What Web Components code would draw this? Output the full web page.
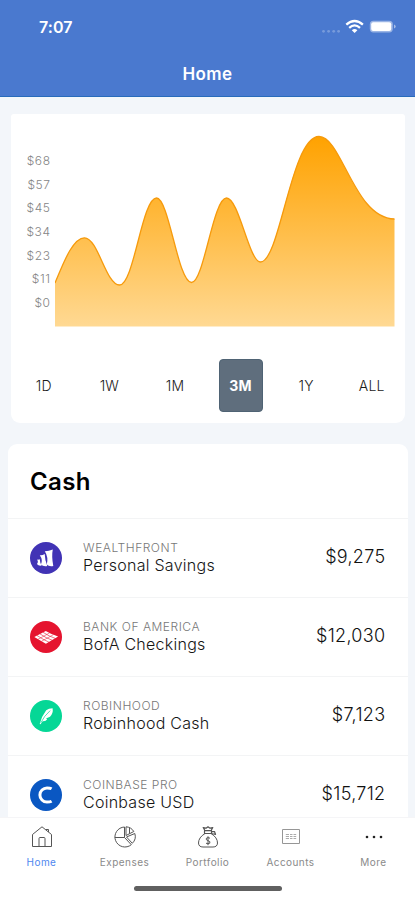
<!DOCTYPE html>
<html lang="en">
<head>
<meta charset="utf-8">
<title>Home</title>
<style>
  html, body { margin: 0; height: 100%; }
  body { font-family: Inter, "Liberation Sans", sans-serif; color: #111; background: #f3f6fa; overflow: hidden; }
</style>
</head>
<body>
<finance-app></finance-app>
<script>
const define = (name, html, setup) => {
  const tpl = document.createElement('template');
  tpl.innerHTML = html;
  customElements.define(name, class extends HTMLElement {
    connectedCallback() {
      if (this.shadowRoot) return;
      this.attachShadow({ mode: 'open' }).append(tpl.content.cloneNode(true));
      if (setup) setup(this, this.shadowRoot);
    }
  });
};

define('status-bar', `
<style>
  :host { display: flex; align-items: center; justify-content: space-between; height: 54px; padding: 0 19px 0 39px; box-sizing: border-box; color: #fff; }
  time { font-size: 16px; font-weight: 600; line-height: 20px; letter-spacing: .1px; }
  svg { display: block; }
</style>
<time>7:07</time>
<svg width="76" height="20" viewBox="0 0 76 20" fill="#fff">
  <g opacity=".25"><circle cx="3.5" cy="14.3" r="1.4"/><circle cx="8.6" cy="14.3" r="1.4"/><circle cx="13.7" cy="14.3" r="1.4"/><circle cx="18.6" cy="14.3" r="1.4"/></g>
  <g fill="none" stroke="#fff" stroke-width="2.3"><path d="M26.3 7.7Q34.6.4 42.9 7.7"/><path d="M29.2 10.8Q34.6 6 40 10.8"/></g>
  <path d="M31.8 13.2Q34.6 10.9 37.4 13.2L34.6 16.1Z"/>
  <rect x="49.8" y="3.8" width="23" height="11.6" rx="3.6" opacity=".45"/>
  <rect x="51.2" y="5.2" width="20" height="8.8" rx="2"/>
  <path d="M74 7.6Q75.700 8.2 75.700 9.6T74 11.6Z" opacity=".5"/>
</svg>`);

define('nav-header', `
<style>
  :host { display: flex; flex-direction: column; height: 97px; flex: none; box-sizing: border-box; background: #4a79cf; border-bottom: 1px solid #286bbb; }
  h1 { margin: 0; flex: 1; padding-top: 9px; font-size: 17px; line-height: 22px; font-weight: 600; letter-spacing: .4px; color: #fff; text-align: center; }
</style>
<status-bar></status-bar>
<h1><slot></slot></h1>`);

define('area-chart', `
<style>
  :host { display: flex; height: 213px; }
  ol { list-style: none; margin: 0; padding: 35px 5px 0 0; width: 44px; box-sizing: border-box; text-align: right; font-size: 12px; color: #858585; font-weight: 300; letter-spacing: .6px; }
  li { height: 23.7px; line-height: 24px; margin-right: -.6px; }
  svg { display: block; flex: none; }
</style>
<ol></ol>
<svg width="340" height="213" viewBox="55 114 340 213">
  <defs><linearGradient id="fade" x1="0" y1="0" x2="0" y2="1"><stop offset="0" stop-color="#ffa200"/><stop offset=".5" stop-color="#ffbd48"/><stop offset="1" stop-color="#ffd993"/></linearGradient></defs>
  <path fill="url(#fade)" d="M55 283C62 267 72 237.8 84.500 237.8C98 237.8 106 285 119.500 285C134 285 142 198 156.500 198C169 198 178 282.500 191.500 282.500C204 282.500 213 198 226.500 198C239 198 249 262 260.500 262C280 262 291 136.500 319 136.500C342 136.500 354 218.500 394.500 219V326.500H55Z"/>
  <path fill="none" stroke="#f69a0c" stroke-width="1.300" d="M55 283C62 267 72 237.8 84.500 237.8C98 237.8 106 285 119.500 285C134 285 142 198 156.500 198C169 198 178 282.500 191.500 282.500C204 282.500 213 198 226.500 198C239 198 249 262 260.500 262C280 262 291 136.500 319 136.500C342 136.500 354 218.500 394.500 219"/>
</svg>`, (el, root) => {
  root.querySelector('ol').innerHTML = el.getAttribute('ticks').split(',').map(t => `<li>${t}</li>`).join('');
});

define('range-option', `
<style>
  :host { display: flex; align-items: center; justify-content: center; font-size: 14px; font-weight: 300; color: #1b1b1b; }
  span { display: flex; align-items: center; justify-content: center; width: 44px; height: 53px; box-sizing: border-box; border-radius: 4px; letter-spacing: .2px; }
  :host([selected]) span { background: #5f6e7d; border: 1px solid #4f6374; color: #fff; font-weight: 700; }
</style>
<span><slot></slot></span>`);

define('chart-card', `
<style>
  :host { display: block; height: 309px; margin: 17px 10px 0 11px; box-sizing: border-box; background: #fff; border-radius: 3px 3px 9px 9px; }
  nav { display: grid; grid-template-columns: repeat(6, 65.600px); margin-top: 32px; }
</style>
<area-chart ticks="$68,$57,$45,$34,$23,$11,$0"></area-chart>
<nav>
  <range-option>1D</range-option><range-option>1W</range-option><range-option>1M</range-option>
  <range-option selected>3M</range-option><range-option>1Y</range-option><range-option>ALL</range-option>
</nav>`);

const logos = {
  wealthfront: `<circle cx="16" cy="16" r="16" fill="#4133b5"/><g fill="#fff"><path d="M14.800 9.200Q18.500 9.300 22.800 7.400Q21.400 14 23.300 24Q19 24.800 16.800 22.600Q18.600 15 14.800 9.200Z"/><path d="M9.800 13.200Q12.500 13.500 14.700 12Q14.900 18.500 17.300 23.900Q13.500 24.900 10.900 22.400Q13.200 18 9.800 13.200Z"/><path d="M7 17.500Q8.400 17.900 9.700 17.200Q10 20.800 11.700 23.500Q8.700 24.200 6.900 21.900Q8.800 20 7 17.500Z"/></g>`,
  bofa: `<circle cx="16" cy="16" r="16" fill="#e5142f"/><path fill="#fff" d="M4.300 16L15.800 10.100Q20 12.700 28.100 15.600L15.900 22.700Q10.500 19.700 4.300 16Z"/><g fill="none" stroke="#e5142f" stroke-width=".6"><path d="M7 14.500Q13 18.500 19 21.200M10 12.900Q16 17 22.300 19.300M13 11.300Q19 15.300 25.500 17.500"/><path d="M8 18.300L19.500 12M11.500 20.300L23.500 13.600" stroke-width=".5"/></g>`,
  robinhood: `<circle cx="16" cy="16" r="16" fill="#05d796"/><path fill="#fff" d="M9.700 23.900Q11.500 16.500 16.200 10.300Q18.700 8.300 22.600 8.200Q23.500 13 20 16.700L16 18.600L17.200 19.200Q15.600 21.500 12.900 21.100L10.500 24.300Z"/><path d="M10.800 22.800Q14 16 20.200 10.600" fill="none" stroke="#05d796" stroke-width=".7"/>`,
  coinbase: `<circle cx="16" cy="16" r="16" fill="#0a57c2"/><path fill="none" stroke="#fff" stroke-width="3" d="M21.600 9.800Q20 8.900 17 8.900A7.100 7.100 0 0 0 17 23.100Q20 23.100 21.600 22.200"/>`
};

define('account-row', `
<style>
  :host { display: flex; align-items: center; height: 79.150px; padding: 0 23px 0 22px; box-sizing: border-box; border-top: 1px solid #f3f4f5; }
  svg { width: 32px; height: 32px; flex: none; }
  div { flex: 1; margin-left: 21px; margin-top: -2px; }
  small, b { display: block; white-space: nowrap; }
  small { font-size: 12px; line-height: 17px; font-weight: 300; color: #777; letter-spacing: .53px; }
  b { font-size: 16px; line-height: 19px; font-weight: 300; color: #161616; letter-spacing: .26px; }
  strong { font-size: 18px; font-weight: 300; color: #111; margin: -4px -.4px 0 0; letter-spacing: .3px; }
</style>
<svg viewBox="0 0 32 32"></svg>
<div><small></small><b><slot></slot></b></div>
<strong></strong>`, (el, root) => {
  root.querySelector('svg').innerHTML = logos[el.getAttribute('logo')];
  root.querySelector('small').textContent = el.getAttribute('bank');
  root.querySelector('strong').textContent = el.getAttribute('amount');
});

define('account-list', `
<style>
  :host { display: block; margin: 21px 7px 0 8px; background: #fff; border-radius: 9px 9px 0 0; }
  h2 { margin: 0; height: 74px; line-height: 75px; padding-left: 22px; font-size: 24px; font-weight: 600; color: #000; letter-spacing: .4px; }
</style>
<h2>Cash</h2>
<slot></slot>`);

const icons = {
  home: `<path d="M2.500 9.500L12 1.800L21.500 9.500V21.500H2.500Z"/><path d="M9 21.500V13.500Q9 12.500 10 12.500H14Q15 12.500 15 13.500V21.500"/><path d="M16 4.500H18.500V7"/>`,
  expenses: `<path d="M11.500 12.500V2A10 10 0 1 0 18.300 19.700Z"/><path d="M1.800 12.500H11.500"/><path d="M13 10.500V1.800A9.700 9.700 0 0 1 20.800 6.500ZM16.500 2.800V8.500M13.500 12L21.800 8.500A9.500 9.500 0 0 1 19.300 18.300Z"/>`,
  portfolio: `<path d="M9 8.500Q2.500 12.500 2.500 18Q2.700 22 7 22H17Q21.300 22 21.500 18Q21.500 12.500 15 8.500Z"/><path d="M8.500 5.700H15.500V8.500H8.500ZM9 5.700L7.200 2.500L10 3.200L12 1.800L14 3.200L16.800 2.500L15 5.700M15.500 6.700L18.500 6.500L19.500 9.500L15.500 8.500" stroke-width="1.200"/><path d="M14 13.200Q12 12.100 10.400 13.200Q9.500 15 12 15.600Q14.700 16.400 13.800 18.200Q12 19.300 10 18.200M12 11.300V20.200"/>`,
  accounts: `<g stroke="#969696"><path d="M3.500 4.500H20.500V18.500H3.500Z"/><path d="M6.800 9.500H10M11 9.500H13.500M14.500 9.500H17.200M6.800 11.500H10M11 11.500H13.500M14.500 11.500H17.200M6.800 13.500H10M11 13.500H13.500M14.500 13.500H17.200" stroke-width=".8"/></g>`,
  more: `<g fill="#222" stroke="none"><circle cx="5" cy="12" r="1.300"/><circle cx="12" cy="12" r="1.300"/><circle cx="19" cy="12" r="1.300"/></g>`
};

define('tab-item', `
<style>
  :host { display: flex; flex-direction: column; align-items: center; color: #8a8a8a; }
  svg { width: 24px; height: 24px; fill: none; stroke: #555; stroke-width: 1; stroke-linejoin: round; }
  span { margin-top: 6px; font-size: 10px; line-height: 14px; font-weight: 400; letter-spacing: .45px; }
  :host([active]) { color: #4f87ef; }
</style>
<svg viewBox="0 0 24 24"></svg>
<span><slot></slot></span>`, (el, root) => {
  root.querySelector('svg').innerHTML = icons[el.getAttribute('icon')];
});

define('tab-bar', `
<style>
  :host { display: flex; flex-direction: column; align-items: center; height: 83px; flex: none; box-sizing: border-box; background: #fff; border-top: 1px solid #f5f5f7; }
  nav { display: grid; grid-template-columns: repeat(5, 1fr); width: 100%; padding-top: 6.500px; height: 68px; box-sizing: border-box; }
  i { display: block; width: 148px; height: 5px; border-radius: 3px; background: #606060; }
</style>
<nav>
  <tab-item icon="home" active>Home</tab-item>
  <tab-item icon="expenses">Expenses</tab-item>
  <tab-item icon="portfolio">Portfolio</tab-item>
  <tab-item icon="accounts">Accounts</tab-item>
  <tab-item icon="more">More</tab-item>
</nav>
<i></i>`);

define('finance-app', `
<style>
  :host { display: flex; flex-direction: column; width: 415px; height: 900px; background: #f3f6fa; overflow: hidden; }
  main { flex: 1; min-height: 0; overflow: hidden; display: flex; flex-direction: column; }
  chart-card, account-list { flex: none; }
</style>
<nav-header>Home</nav-header>
<main>
  <chart-card></chart-card>
  <account-list>
    <account-row logo="wealthfront" bank="WEALTHFRONT" amount="$9,275">Personal Savings</account-row>
    <account-row logo="bofa" bank="BANK OF AMERICA" amount="$12,030">BofA Checkings</account-row>
    <account-row logo="robinhood" bank="ROBINHOOD" amount="$7,123">Robinhood Cash</account-row>
    <account-row logo="coinbase" bank="COINBASE PRO" amount="$15,712">Coinbase USD</account-row>
  </account-list>
</main>
<tab-bar></tab-bar>`);
</script>
</body>
</html>
